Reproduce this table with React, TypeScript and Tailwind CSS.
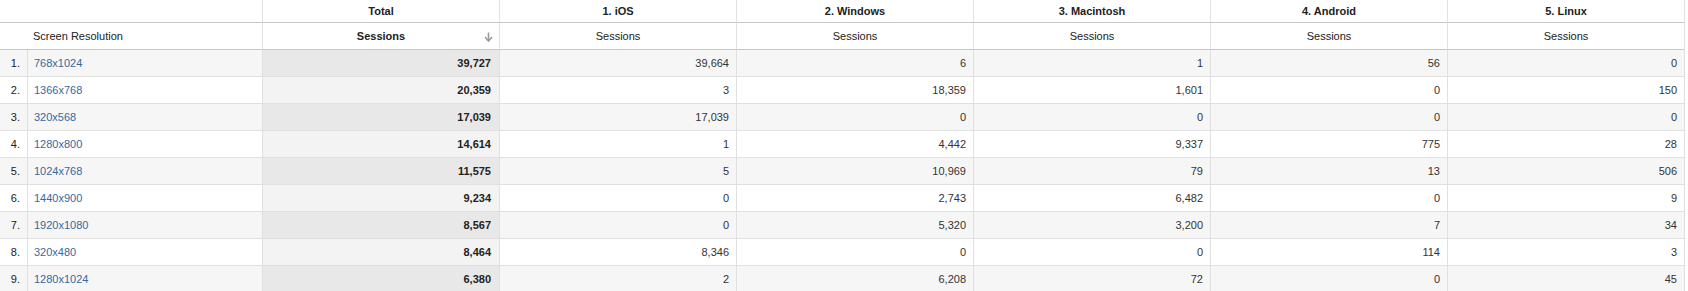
import React from 'react';

const platforms = ['1. iOS', '2. Windows', '3. Macintosh', '4. Android', '5. Linux'];

const rows: { res: string; total: string; values: string[] }[] = [
  { res: '768x1024', total: '39,727', values: ['39,664', '6', '1', '56', '0'] },
  { res: '1366x768', total: '20,359', values: ['3', '18,359', '1,601', '0', '150'] },
  { res: '320x568', total: '17,039', values: ['17,039', '0', '0', '0', '0'] },
  { res: '1280x800', total: '14,614', values: ['1', '4,442', '9,337', '775', '28'] },
  { res: '1024x768', total: '11,575', values: ['5', '10,969', '79', '13', '506'] },
  { res: '1440x900', total: '9,234', values: ['0', '2,743', '6,482', '0', '9'] },
  { res: '1920x1080', total: '8,567', values: ['0', '5,320', '3,200', '7', '34'] },
  { res: '320x480', total: '8,464', values: ['8,346', '0', '0', '114', '3'] },
  { res: '1280x1024', total: '6,380', values: ['2', '6,208', '72', '0', '45'] },
];

const SortArrow = () => (
  <svg width="9" height="10" viewBox="0 0 9 10" className="text-[#9a9a9a]">
    <path d="M4.5 0.5v8" stroke="currentColor" strokeWidth="1.6" fill="none" />
    <path d="M1 5l3.5 4 3.5-4" stroke="currentColor" strokeWidth="1.6" fill="none" />
  </svg>
);

export default function App() {
  return (
    <div className="h-[291px] w-[1688px] overflow-hidden bg-white font-['Liberation_Sans',Arial,sans-serif] text-[11px] text-[#222]">
      <div className="grid w-[1685px] grid-cols-[28px_235px_repeat(6,237px)]">
        {/* top header */}
        <div className="col-span-2 h-[23px] border-r border-b border-r-[#e2e2e2] border-b-[#c6c6c6]" />
        <div className="flex h-[23px] items-center justify-center border-r border-b border-r-[#e2e2e2] border-b-[#c6c6c6] font-bold">
          Total
        </div>
        {platforms.map((p) => (
          <div
            key={p}
            className="flex h-[23px] items-center justify-center border-r border-b border-r-[#e2e2e2] border-b-[#c6c6c6] font-bold"
          >
            {p}
          </div>
        ))}

        {/* metric header */}
        <div className="col-span-2 flex h-[27px] items-center border-r border-b border-r-[#e2e2e2] border-b-[#c6c6c6] pl-[33px]">
          Screen Resolution
        </div>
        <div className="relative flex h-[27px] items-center justify-center border-r border-b border-r-[#e2e2e2] border-b-[#c6c6c6] font-bold">
          Sessions
          <span className="absolute right-[6px] top-[9px]">
            <SortArrow />
          </span>
        </div>
        {platforms.map((p) => (
          <div
            key={p}
            className="flex h-[27px] items-center justify-center border-r border-b border-r-[#e2e2e2] border-b-[#c6c6c6]"
          >
            Sessions
          </div>
        ))}

        {/* data */}
        {rows.map((r, i) => {
          const odd = i % 2 === 0;
          const bg = odd ? 'bg-[#f6f6f6]' : 'bg-white';
          return (
            <React.Fragment key={r.res}>
              <div
                className={`flex h-[27px] items-center justify-end border-r border-b border-[#e0e0e0] pr-[7px] ${bg}`}
              >
                {i + 1}.
              </div>
              <div className={`flex h-[27px] items-center border-r border-b border-[#e0e0e0] pl-[6px] ${bg}`}>
                <a href="#" className="text-[#35699f]">
                  {r.res}
                </a>
              </div>
              <div
                className={`flex h-[27px] items-center justify-end border-r border-b border-[#e0e0e0] pr-2 font-bold ${
                  odd ? 'bg-[#e8e8e8]' : 'bg-[#f3f3f3]'
                }`}
              >
                {r.total}
              </div>
              {r.values.map((v, j) => (
                <div
                  key={j}
                  className={`flex h-[27px] items-center justify-end border-r border-b border-[#e0e0e0] pr-[7px] text-[#333] ${bg}`}
                >
                  {v}
                </div>
              ))}
            </React.Fragment>
          );
        })}
      </div>
    </div>
  );
}
